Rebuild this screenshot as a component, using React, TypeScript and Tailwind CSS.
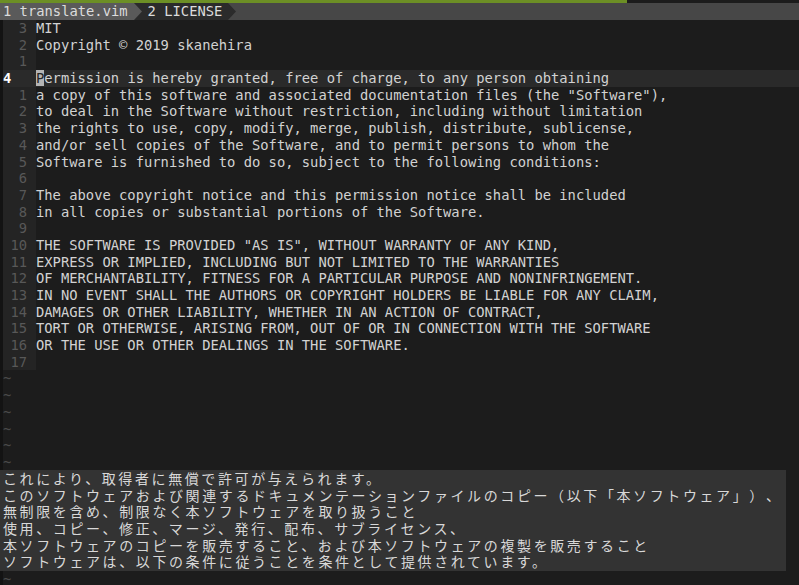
const LINES: { n: string; text: string; cur?: boolean }[] = [
  { n: '3', text: 'MIT' },
  { n: '2', text: 'Copyright © 2019 skanehira' },
  { n: '1', text: '' },
  { n: '4', text: 'Permission is hereby granted, free of charge, to any person obtaining', cur: true },
  { n: '1', text: 'a copy of this software and associated documentation files (the "Software"),' },
  { n: '2', text: 'to deal in the Software without restriction, including without limitation' },
  { n: '3', text: 'the rights to use, copy, modify, merge, publish, distribute, sublicense,' },
  { n: '4', text: 'and/or sell copies of the Software, and to permit persons to whom the' },
  { n: '5', text: 'Software is furnished to do so, subject to the following conditions:' },
  { n: '6', text: '' },
  { n: '7', text: 'The above copyright notice and this permission notice shall be included' },
  { n: '8', text: 'in all copies or substantial portions of the Software.' },
  { n: '9', text: '' },
  { n: '10', text: 'THE SOFTWARE IS PROVIDED "AS IS", WITHOUT WARRANTY OF ANY KIND,' },
  { n: '11', text: 'EXPRESS OR IMPLIED, INCLUDING BUT NOT LIMITED TO THE WARRANTIES' },
  { n: '12', text: 'OF MERCHANTABILITY, FITNESS FOR A PARTICULAR PURPOSE AND NONINFRINGEMENT.' },
  { n: '13', text: 'IN NO EVENT SHALL THE AUTHORS OR COPYRIGHT HOLDERS BE LIABLE FOR ANY CLAIM,' },
  { n: '14', text: 'DAMAGES OR OTHER LIABILITY, WHETHER IN AN ACTION OF CONTRACT,' },
  { n: '15', text: 'TORT OR OTHERWISE, ARISING FROM, OUT OF OR IN CONNECTION WITH THE SOFTWARE' },
  { n: '16', text: 'OR THE USE OR OTHER DEALINGS IN THE SOFTWARE.' },
  { n: '17', text: '' },
]

const TRANSLATION = [
  'これにより、取得者に無償で許可が与えられます。',
  'このソフトウェアおよび関連するドキュメンテーションファイルのコピー（以下「本ソフトウェア」）、',
  '無制限を含め、制限なく本ソフトウェアを取り扱うこと',
  '使用、コピー、修正、マージ、発行、配布、サブライセンス、',
  '本ソフトウェアのコピーを販売すること、および本ソフトウェアの複製を販売すること',
  'ソフトウェアは、以下の条件に従うことを条件として提供されています。',
]

const mono = { fontFamily: '"DejaVu Sans Mono", "Liberation Mono", monospace' }

function Chevron({ from, to }: { from: string; to: string }) {
  return (
    <svg width="8" height="17" viewBox="0 0 8 17" className="block shrink-0">
      <rect width="8" height="17" fill={to} />
      <path d="M0 0 L8 8.5 L0 17 Z" fill={from} />
    </svg>
  )
}

export default function App() {
  return (
    <div
      className="relative w-[799px] h-[585px] overflow-hidden bg-[#1c1c1c] text-[13.8px] text-[#d2d2d2]"
      style={mono}
    >
      <div className="h-[3px] w-[627px] bg-[#6c8f25]" />
      <div className="flex h-[17px] items-center bg-[#474747] leading-[17px]">
        <div className="bg-[#5a5a5a] pl-[3px] pr-[6px] text-[#dcdcdc]">1 translate.vim</div>
        <Chevron from="#5a5a5a" to="#2b2b2b" />
        <div className="bg-[#2b2b2b] pl-[6px] pr-[6px] text-[#dcdcdc]">2 LICENSE</div>
        <Chevron from="#2b2b2b" to="#474747" />
      </div>
      <div className="flex flex-col">
        {LINES.map((l, i) => (
          <div
            key={i}
            className={`flex h-[16.7px] leading-[16.7px] whitespace-pre ${l.cur ? 'bg-[#2a2a2a]' : ''}`}
          >
            <div className="w-[3px] bg-[#131313]" />
            {l.cur ? (
              <div className="w-[33px] font-bold text-white">4</div>
            ) : (
              <div className="w-[33px] bg-[#242424] pr-[9px] text-right text-[#585858]">{l.n}</div>
            )}
            <div>
              {l.cur ? (
                <>
                  <span className="bg-[#b4b4b4] text-[#262626]">P</span>
                  {l.text.slice(1)}
                </>
              ) : (
                l.text
              )}
            </div>
          </div>
        ))}
        {Array.from({ length: 13 }).map((_, i) => (
          <div key={'t' + i} className="flex h-[16.7px] leading-[16.7px]">
            <div className="w-[3px] bg-[#131313]" />
            <div className="text-[#4a4a4a]">~</div>
          </div>
        ))}
      </div>
      <div
        className="absolute left-0 top-[470px] w-[786px] h-[101px] bg-[#333333] pl-[3px] text-[14px] leading-[16.7px] tracking-[2.6px] text-[#d8d8d8] whitespace-pre [text-spacing-trim:space-all]"
        style={{ fontFamily: '"Noto Sans CJK JP", "Noto Sans", sans-serif' }}
      >
        {TRANSLATION.map((t, i) => (
          <div key={i} className="h-[16.7px]">{t}</div>
        ))}
      </div>
    </div>
  )
}
